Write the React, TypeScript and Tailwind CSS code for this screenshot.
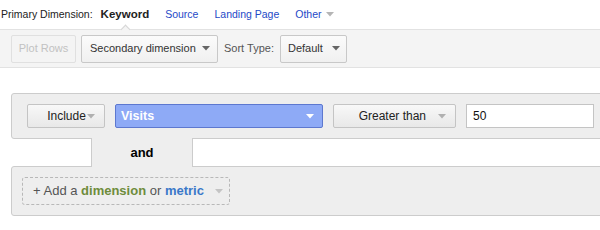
const Caret = ({ className = '' }: { className?: string }) => (
  <svg className={className} width="8" height="5" viewBox="0 0 8 5">
    <path d="M0 0h8L4 4.5z" fill="currentColor" />
  </svg>
)

export default function App() {
  return (
    <div className="w-[600px] h-[230px] overflow-hidden bg-white font-['Liberation_Sans',Arial,sans-serif]">
      {/* primary dimension row */}
      <div className="h-[29px] flex items-center pl-px text-[10.5px]">
        <span className="text-[#222]">Primary Dimension:</span>
        <span className="ml-[8px] text-[11.5px] font-bold text-[#222]">Keyword</span>
        <a className="ml-[16px] text-[#2449c7]">Source</a>
        <a className="ml-[16px] text-[#2449c7]">Landing Page</a>
        <a className="ml-[16px] text-[#2449c7] flex items-center gap-[4px]">
          Other
          <Caret className="text-[#b5b5b5]" />
        </a>
      </div>

      {/* toolbar */}
      <div className="relative h-[39px] border-y border-[#e2e2e2] bg-[#f4f4f4] flex items-center pl-[11px] text-[11px]">
        <div className="absolute left-[122px] -top-[4px] w-[7px] h-[7px] rotate-45 border-l border-t border-[#d6d6d6] bg-[#f4f4f4]" />
        <button className="h-[28px] w-[65px] rounded-[2px] border border-[#e0e0e0] bg-[#f4f4f4] text-[#c2c2c2]">
          Plot Rows
        </button>
        <button className="ml-[5px] h-[28px] w-[137px] rounded-[2px] border border-[#c8c8c8] bg-gradient-to-b from-[#fbfbfb] to-[#f0f0f0] text-[#333] flex items-center justify-between pl-[8px] pr-[7px]">
          Secondary dimension
          <Caret className="text-[#666]" />
        </button>
        <span className="ml-[6px] text-[#555]">Sort Type:</span>
        <button className="ml-[6px] h-[28px] w-[67px] rounded-[2px] border border-[#c8c8c8] bg-gradient-to-b from-[#fbfbfb] to-[#f0f0f0] text-[#333] flex items-center justify-between pl-[7px] pr-[6px]">
          Default
          <Caret className="text-[#666]" />
        </button>
      </div>

      <div className="h-[25px]" />

      {/* filter panel */}
      <div className="ml-[11px] w-[620px] rounded-[3px] border border-[#cccccc] bg-[#eeeeee] px-[15px] py-[10px] flex items-center gap-[10px] text-[12px]">
        <button className="h-[24px] w-[78px] rounded-[2px] border border-[#c4c4c4] bg-gradient-to-b from-[#f8f8f8] to-[#e8e8e8] text-[#222] flex items-center justify-center gap-[1px] pl-[10px]">
          Include
          <Caret className="text-[#b0b0b0]" />
        </button>
        <button className="h-[24px] w-[208px] rounded-[2px] border border-[#5d78cf] bg-[#8eaaf6] text-white font-bold text-[12.5px] flex items-center justify-between pl-[5px] pr-[8px]">
          Visits
          <Caret className="text-white" />
        </button>
        <button className="h-[24px] w-[123px] rounded-[2px] border border-[#c4c4c4] bg-gradient-to-b from-[#f8f8f8] to-[#e8e8e8] text-[#222] flex items-center justify-end gap-[12px] pr-[9px]">
          Greater than
          <Caret className="text-[#b0b0b0]" />
        </button>
        <div className="h-[24px] w-[128px] border border-[#c4c4c4] bg-white text-[#111] flex items-center pl-[6px]">
          50
        </div>
      </div>

      {/* and connector */}
      <div className="relative z-10 -mt-px ml-[91px] h-[29px] w-[102px] border-x border-[#cccccc] bg-[#eeeeee] flex items-center justify-center text-[13px] font-bold text-black">
        and
      </div>

      {/* add panel */}
      <div className="-mt-px ml-[11px] w-[620px] rounded-[3px] border border-[#cccccc] bg-[#eeeeee] p-[10px]">
        <button className="h-[28px] w-[208px] rounded-[3px] border border-dashed border-[#b8b8b8] flex items-center pl-[10px] text-[13px] text-[#555]">
          <span>+ Add a&nbsp;</span>
          <span className="font-bold text-[#6e8c3c]">dimension</span>
          <span>&nbsp;or&nbsp;</span>
          <span className="font-bold text-[#3a78c9]">metric</span>
          <Caret className="ml-[11px] text-[#c4c4c4]" />
        </button>
      </div>
    </div>
  )
}
